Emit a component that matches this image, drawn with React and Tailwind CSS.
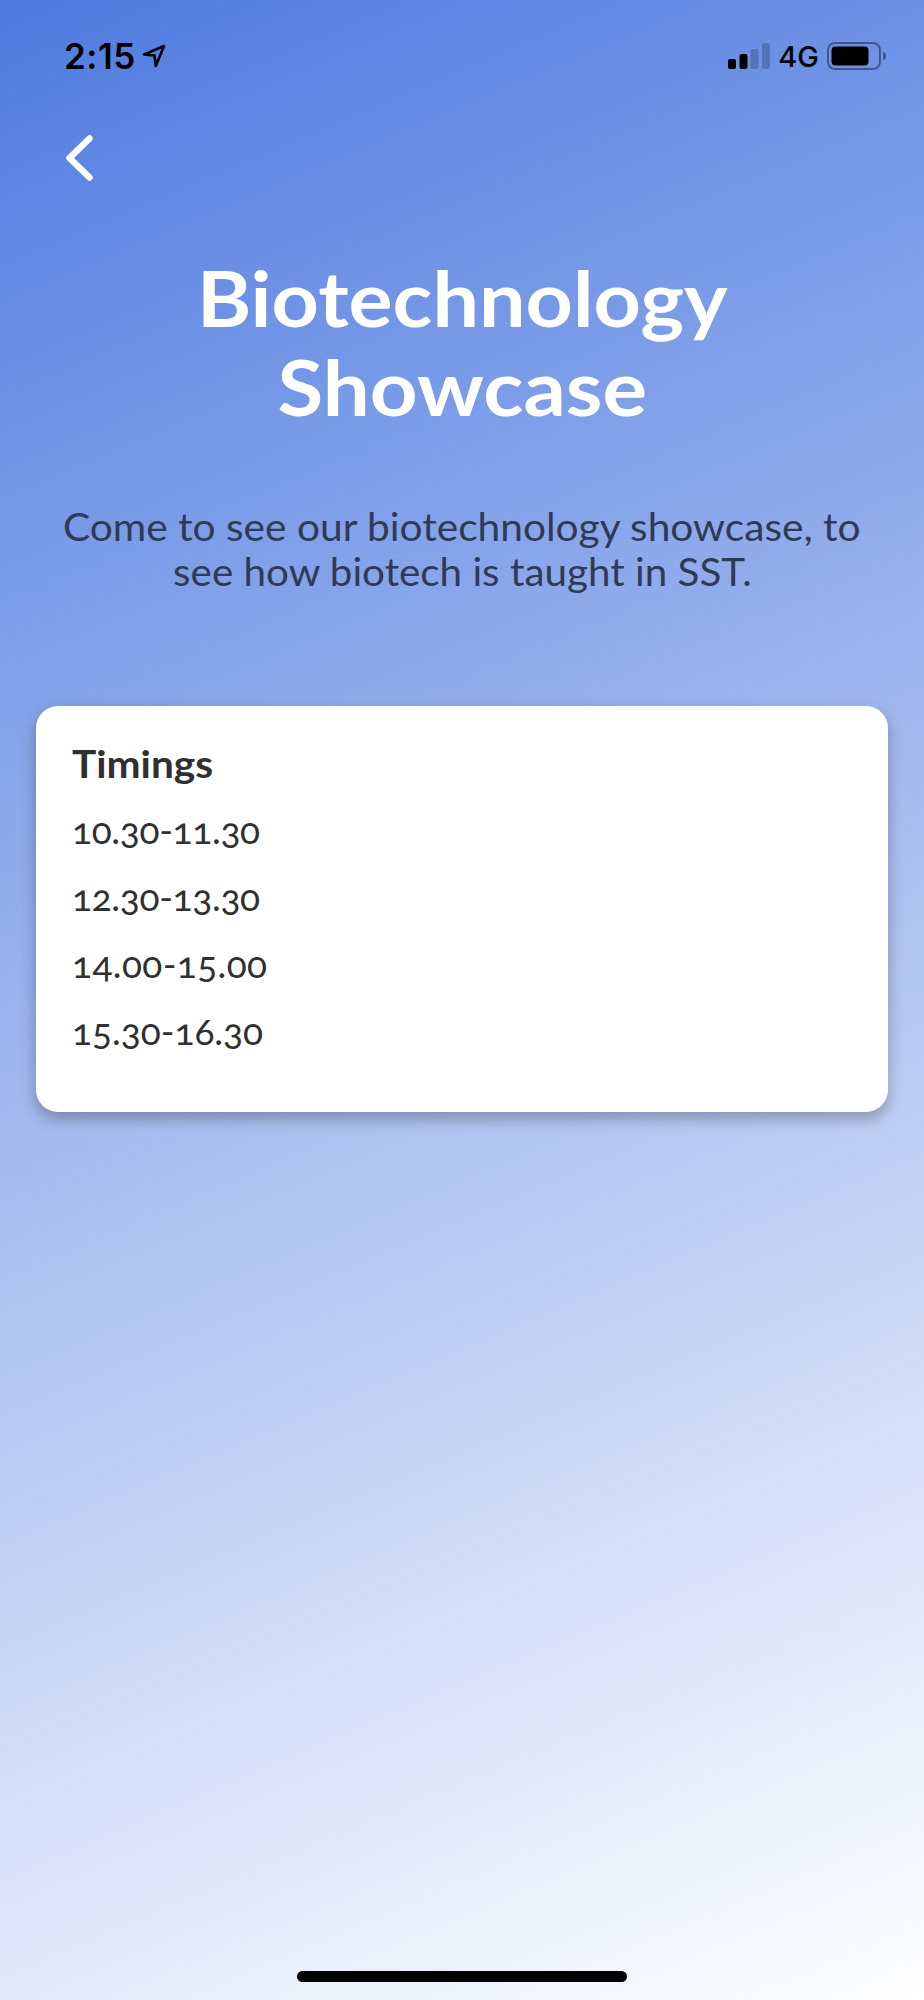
import React from 'react';

const timings = [
  { time: '10.30-11.30', tracking: 'tracking-[-0.3px]' },
  { time: '12.30-13.30', tracking: 'tracking-[-0.3px]' },
  { time: '14.00-15.00', tracking: 'tracking-[0.4px]' },
  { time: '15.30-16.30', tracking: 'tracking-[0px]' },
];

const StatusBar = () => (
  <div className="flex h-[112px] items-center justify-between pl-[64px] pr-[37px] font-['Inter',sans-serif] text-black">
    <div className="flex items-center gap-[6px]">
      <span className="text-[35px] font-semibold leading-none tracking-[0.5px]">2:15</span>
      <svg className="mb-px" width="24" height="24" viewBox="0 0 24 24" fill="none" stroke="black" strokeWidth="2.6" strokeLinejoin="round">
        <path d="M22 2 L2 10.5 L12.5 11.5 L13.8 22 Z" />
      </svg>
    </div>
    <div className="flex items-center">
      <svg width="42" height="26" viewBox="0 0 42 26">
        <rect x="0" y="16" width="8" height="10" rx="2" />
        <rect x="11.5" y="11" width="8" height="15" rx="2" />
        <rect x="22.5" y="6" width="8" height="20" rx="2" opacity="0.2" />
        <rect x="34" y="0" width="8" height="26" rx="2" opacity="0.2" />
      </svg>
      <span className="ml-2 text-[29px] font-medium leading-none">4G</span>
      <svg className="ml-2" width="60" height="28" viewBox="0 0 60 28">
        <rect x="1" y="1" width="52" height="26" rx="7" fill="none" stroke="black" strokeWidth="2" opacity="0.4" />
        <rect x="4.5" y="4.5" width="37" height="19" rx="4" />
        <path d="M56 9.5 Q59 11 59 14 Q59 17 56 18.5 Z" opacity="0.4" />
      </svg>
    </div>
  </div>
);

export default function App() {
  return (
    <div className="flex h-[2000px] w-[924px] flex-col bg-[linear-gradient(157deg,#4f7be0_0%,#ffffff_100%)] font-['Lato',sans-serif]">
      <StatusBar />

      <button className="ml-[65px] mt-[22px] h-[48px] w-[30px]" aria-label="Back">
        <svg width="30" height="48" viewBox="0 0 30 48" fill="none" stroke="white" strokeWidth="6.5" strokeLinecap="round" strokeLinejoin="round">
          <path d="M24.5 4.5 L4.5 24 L24.5 43.5" />
        </svg>
      </button>

      <h1 className="mt-[71px] text-center text-[76px] font-bold leading-[89px] text-white">
        <span className="inline-block scale-x-[1.086]">Biotechnology</span>
        <br />
        <span className="inline-block scale-x-[1.098]">Showcase</span>
      </h1>

      <p className="mt-[73px] text-center text-[38px] leading-[45px] text-[#2f3b55]">
        <span className="inline-block scale-x-[1.07]">Come to see our biotechnology showcase, to</span>
        <br />
        <span className="inline-block scale-x-[1.062]">see how biotech is taught in SST.</span>
      </p>

      <section className="mx-9 mt-[112px] h-[406px] rounded-[22px] bg-white px-9 pt-[35px] text-[#303030] shadow-[0_7px_15px_rgba(0,0,0,0.28)]">
        <h2 className="origin-left scale-x-[1.07] text-[38px] font-bold leading-[45px]">Timings</h2>
        <ul className="mt-[10px] oldstyle-nums">
          {timings.map(({ time, tracking }) => (
            <li key={time} className={`h-[67px] text-[37px] leading-[67px] ${tracking}`}>
              {time}
            </li>
          ))}
        </ul>
      </section>

      <div className="mx-auto mb-[18px] mt-auto h-[11px] w-[330px] rounded-full bg-black" />
    </div>
  );
}
